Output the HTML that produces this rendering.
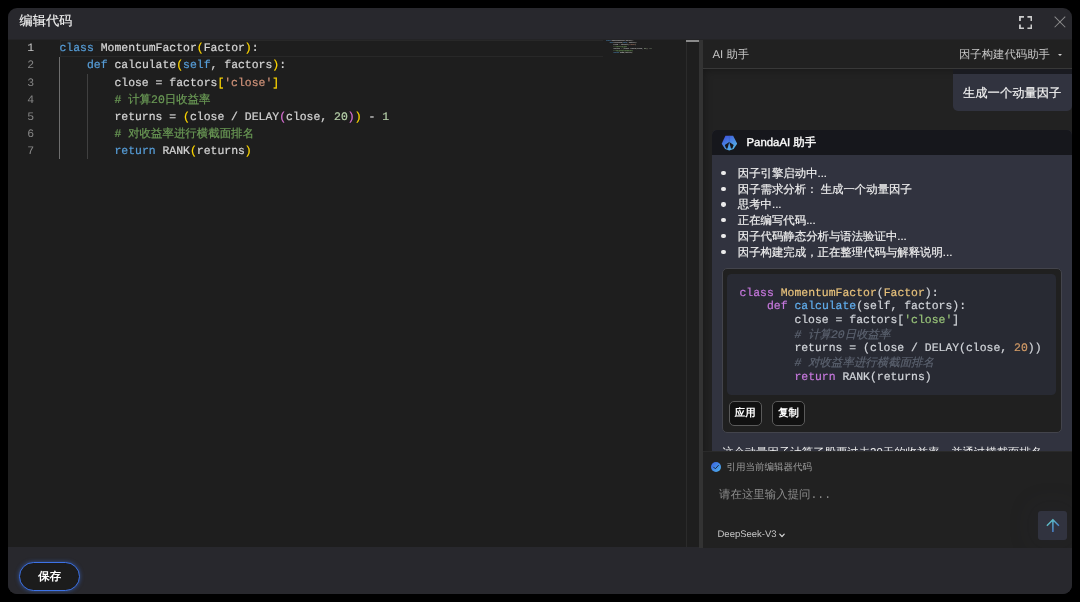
<!DOCTYPE html>
<html lang="zh">
<head>
<meta charset="utf-8">
<title>编辑代码</title>
<style>
*{box-sizing:border-box;margin:0;padding:0}
html,body{width:1080px;height:602px;background:#000;overflow:hidden}
body{font-family:"Liberation Sans",sans-serif;color:#ddd;position:relative;text-rendering:geometricPrecision}
.abs{position:absolute}
#modal{will-change:transform;position:absolute;left:8px;top:8px;width:1064px;height:586px;border-radius:9px;background:#28282d;overflow:hidden}
/* coordinates inside modal are offset by (8,8) */
#title{-webkit-text-stroke:.15px;position:absolute;left:11.5px;top:0;height:31.5px;line-height:25px;font-size:13.2px;color:#f2f2f2}
#ic-full{position:absolute;left:1010.6px;top:7.7px;width:13.4px;height:13.4px}
#ic-close{position:absolute;left:1045.9px;top:8.2px;width:11.9px;height:11.9px}
#editor{position:absolute;left:0;top:31.5px;width:690.7px;height:507.5px;background:#1e1e1e;overflow:hidden}
#split{position:absolute;left:690.8px;top:31.5px;width:4px;height:508.4px;background:#333}
#panel{position:absolute;left:694.5px;top:31.5px;width:369.5px;height:508.5px;background:#212121;overflow:hidden}
#tstrip{position:absolute;left:0;top:31px;width:1064px;height:1px;background:#242426;z-index:5}
#footer{position:absolute;left:0;top:540px;width:1064px;height:46px;background:#28282d}
/* editor */
.mono{font-family:"Liberation Mono",monospace}
#gutter{position:absolute;left:0;top:0;width:26px;text-align:right;font-size:11.45px;line-height:17.1px;color:#858585;padding-top:0.9px}
#gutter div{height:17.1px}
#gutter .act{color:#c6c6c6}
#code{position:absolute;left:51.5px;top:0;-webkit-text-stroke:.22px;font-size:11.45px;line-height:17.1px;color:#d4d4d4;white-space:pre;padding-top:0.9px}
#code div{height:17.1px}
#curline{position:absolute;left:51.5px;top:0;width:543px;height:17.1px;border:1.9px solid #282828;border-right:0}
.guide{position:absolute;width:1px;background:#404040}
.kw{color:#569cd6}.cm{color:#6a9955}.st{color:#ce9178}.nu{color:#b5cea8}.b1{color:#ffd700}.b2{color:#da70d6}
#mini{position:absolute;left:598px;top:0.2px;font-size:11.45px;line-height:17.1px;color:#d4d4d4;white-space:pre;transform-origin:0 0;transform:scale(.138,.111);-webkit-text-stroke:1.3px;opacity:.62}
#mini .b1,#mini .b2{color:#9c9c84}
#mini div{height:17.1px}
#sbline{position:absolute;left:677.6px;top:0;width:1px;height:100%;background:#2b2b2b}
#sbmark{position:absolute;left:678.3px;top:0;width:12.4px;height:2px;background:#8a8a8a}
/* panel */
#phead{position:absolute;left:0;top:0;width:100%;height:29.5px;border-bottom:1px solid #383838;font-size:11.4px;color:#c6c6c6}
#phead .l{position:absolute;left:10px;top:0;line-height:31px}
#phead .r{position:absolute;right:22px;top:0;line-height:31px;color:#c8c8c8}
#phead .caret{position:absolute;left:355.3px;top:14.2px;width:0;height:0;border-left:2.3px solid transparent;border-right:2.3px solid transparent;border-top:2.6px solid #cfcfcf}
#chat{position:absolute;left:0;top:29.5px;width:369.5px;height:382px;overflow:hidden;background:#222;box-shadow:inset 7px 7px 9px -6px rgba(0,0,0,.3)}
#ubub{position:absolute;left:250.5px;top:0;width:119px;height:41.8px;background:#31333f;border-radius:0 0 5px 5px;overflow:hidden}
#ubub .top{height:4.6px;background:#1a1b21}
#ubub .tx{-webkit-text-stroke:.18px;font-size:12.3px;color:#f4f4f4;line-height:39px;padding-left:10px;white-space:nowrap}
#card{position:absolute;left:9.5px;top:61px;width:360px;height:340px;background:#31333f;border-radius:5px 5px 0 0;overflow:hidden}
#chead{height:24.8px;background:#16171c;position:relative}
#chead svg{position:absolute;left:9px;top:5px;width:16px;height:16px}
#chead span{position:absolute;left:34.5px;top:1.3px;line-height:25px;font-size:11.4px;color:#fff;-webkit-text-stroke:0.35px #fff}
ul#steps{-webkit-text-stroke:.18px;list-style:none;position:absolute;left:0;top:36.8px;font-size:11.4px;line-height:15.75px;color:#f0f0f0}
ul#steps li{padding-left:25.8px;position:relative;white-space:nowrap;height:15.75px}
ul#steps li:before{content:"";position:absolute;left:9.35px;top:4.15px;width:4.3px;height:4.3px;border-radius:50%;background:#ebebeb}
#cb{position:absolute;left:10px;top:138.4px;width:340.1px;height:164.2px;background:#202020;border:1px solid #43444c;border-radius:5px}
#pre{position:absolute;left:4.1px;top:4.7px;width:329.2px;height:120.7px;background:#282a33;border-radius:4.5px;overflow:hidden;-webkit-text-stroke:.2px;font-size:11.45px;line-height:13.3px;color:#d3d6db;white-space:pre;padding:12.95px 0 0 12.4px}
#pre div{height:13.3px}
.hk{color:#c678dd}.hc{color:#e6c07b}.hf{color:#61aeee}.hs{color:#98c379}.hn{color:#d19a66}.hm{color:#5c6370;font-style:italic}
.btn{position:absolute;top:131.9px;width:32.5px;height:24.5px;border:1px solid #5a5a5a;border-radius:5px;background:#111;color:#fff;font-weight:bold;font-size:10.4px;line-height:24.6px;text-align:center}
#expl{position:absolute;left:10px;top:314.5px;font-size:11.4px;line-height:16px;color:#f0f0f0;white-space:nowrap}
#inp{position:absolute;left:0;top:411.5px;width:369.5px;height:96px;background:#212121;border-top:1px solid #2a2a2a}
#chk{position:absolute;left:8.4px;top:10px;width:10px;height:10px}
#chkl{position:absolute;left:24px;top:8.6px;font-size:9.5px;line-height:14px;color:#9e9e9e}
#ph{position:absolute;left:16.5px;top:36.1px;font-size:11.45px;line-height:16px;color:#8c8c8c;white-space:pre}
#model{position:absolute;left:15px;top:75.9px;font-size:9.5px;line-height:14px;color:#c6c6c6}
#model svg{position:absolute;left:61.5px;top:5.2px;width:6px;height:5px}
#send{position:absolute;left:335.6px;top:59.2px;width:28.7px;height:28.4px;border-radius:3px;background:#31333f;box-shadow:0 0 24px 10px rgba(60,62,80,.07)}
#send svg{position:absolute;left:8px;top:7px;width:14px;height:15px}
#save{position:absolute;left:11px;top:13.7px;width:61.3px;height:29.2px;border-radius:15px;border:1.3px solid #3d72e6;background:#1c1c1c;color:#fff;font-weight:bold;font-size:11.4px;line-height:28.8px;text-align:center;box-shadow:0 0 4px rgba(61,114,230,.55)}
</style>
</head>
<body>
<div id="modal">
  <div id="title">编辑代码</div>
  <svg id="ic-full" viewBox="0 0 14 14" fill="none" stroke="#cdcdcd" stroke-width="1.9"><path d="M1 5.2V1H5.2M8.8 1H13V5.2M13 8.8V13H8.8M5.2 13H1V8.8"/></svg>
  <svg id="ic-close" viewBox="0 0 13 13" fill="none" stroke="#8c8c8c" stroke-width="1.1"><path d="M0.7 0.7L12.3 12.3M12.3 0.7L0.7 12.3"/></svg>

  <div id="editor">
    <div id="curline"></div>
    <div class="guide" style="left:51px;top:17.3px;height:102.5px;background:#6e6e6e"></div>
    <div class="guide" style="left:79px;top:34.4px;height:85.4px"></div>
    <div id="gutter" class="mono"><div class="act">1</div><div>2</div><div>3</div><div>4</div><div>5</div><div>6</div><div>7</div></div>
    <div id="code" class="mono"><div><span class="kw">class</span> MomentumFactor<span class="b1">(</span>Factor<span class="b1">)</span>:</div><div>    <span class="kw">def</span> calculate<span class="b1">(</span><span class="kw">self</span>, factors<span class="b1">)</span>:</div><div>        close = factors<span class="b1">[</span><span class="st">'close'</span><span class="b1">]</span></div><div>        <span class="cm"># 计算20日收益率</span></div><div>        returns = <span class="b1">(</span>close / DELAY<span class="b2">(</span>close, <span class="nu">20</span><span class="b2">)</span><span class="b1">)</span> - <span class="nu">1</span></div><div>        <span class="cm"># 对收益率进行横截面排名</span></div><div>        <span class="kw">return</span> RANK<span class="b1">(</span>returns<span class="b1">)</span></div></div>
    <div id="mini" class="mono"><div><span class="kw">class</span> MomentumFactor<span class="b1">(</span>Factor<span class="b1">)</span>:</div><div>    <span class="kw">def</span> calculate<span class="b1">(</span><span class="kw">self</span>, factors<span class="b1">)</span>:</div><div>        close = factors<span class="b1">[</span><span class="st">'close'</span><span class="b1">]</span></div><div>        <span class="cm"># 计算20日收益率</span></div><div>        returns = <span class="b1">(</span>close / DELAY<span class="b2">(</span>close, <span class="nu">20</span><span class="b2">)</span><span class="b1">)</span> - <span class="nu">1</span></div><div>        <span class="cm"># 对收益率进行横截面排名</span></div><div>        <span class="kw">return</span> RANK<span class="b1">(</span>returns<span class="b1">)</span></div></div>
    <div id="sbline"></div>
    <div id="sbmark"></div>
  </div>
  <div id="split"></div>

  <div id="panel">
    <div id="phead"><span class="l">AI 助手</span><span class="r">因子构建代码助手</span><i class="caret"></i></div>
    <div id="chat">
      <div id="ubub"><div class="top"></div><div class="tx">生成一个动量因子</div></div>
      <div id="card">
        <div id="chead">
          <svg viewBox="-0.5 -0.1 16 16"><defs><linearGradient id="lg" x1="0.15" y1="0" x2="0.85" y2="1"><stop offset="0" stop-color="#3d52dc"/><stop offset="1" stop-color="#58c0e8"/></linearGradient></defs><path d="M3.9 0.6H11.6L15.7 8.6L12.1 13.8L7.75 15.5L3.6 13.8L0.2 8.6Z" fill="url(#lg)"/><path d="M7.74 7L3.3 9.8L4.6 13.3L6 13.3ZM7.74 7L12.18 9.8L10.88 13.3L9.48 13.3Z" fill="#16171c"/><path d="M7.75 0.6V6.8" stroke="#2c47b8" stroke-width="0.5" opacity=".7"/></svg>
          <span>PandaAI 助手</span>
        </div>
        <ul id="steps"><li>因子引擎启动中...</li><li>因子需求分析： 生成一个动量因子</li><li>思考中...</li><li>正在编写代码...</li><li>因子代码静态分析与语法验证中...</li><li>因子构建完成，正在整理代码与解释说明...</li></ul>
        <div id="cb">
          <div id="pre" class="mono"><div><span class="hk">class</span> <span class="hc">MomentumFactor</span>(<span class="hc">Factor</span>):</div><div>    <span class="hk">def</span> <span class="hf">calculate</span>(self, factors):</div><div>        close = factors[<span class="hs">'close'</span>]</div><div style="margin-top:1.6px">        <span class="hm"># 计算20日收益率</span></div><div style="margin-top:.6px">        returns = (close / DELAY(close, <span class="hn">20</span>))</div><div style="margin-top:1.4px">        <span class="hm"># 对收益率进行横截面排名</span></div><div style="margin-top:1px">        <span class="hk">return</span> RANK(returns)</div></div>
          <div class="btn" style="left:6px">应用</div>
          <div class="btn" style="left:49.3px">复制</div>
        </div>
        <div id="expl">这个动量因子计算了股票过去20天的收益率，并通过横截面排名</div>
      </div>
    </div>
    <div id="inp">
      <svg id="chk" viewBox="0 0 10 10"><defs><linearGradient id="lg2" x1="0" y1="0" x2="1" y2="1"><stop offset="0" stop-color="#3b5fe0"/><stop offset="1" stop-color="#4db4ec"/></linearGradient></defs><circle cx="5" cy="5" r="5" fill="url(#lg2)"/><path d="M2.6 5.1L4.3 6.8L7.4 3.4" fill="none" stroke="#18213c" stroke-width="0.95" stroke-linecap="round" stroke-linejoin="round"/></svg>
      <div id="chkl">引用当前编辑器代码</div>
      <div id="ph" class="mono">请在这里输入提问...</div>
      <div id="model">DeepSeek-V3<svg viewBox="0 0 6 5" fill="none" stroke="#d8d8d8" stroke-width="1.2" stroke-linecap="round" stroke-linejoin="round"><path d="M0.8 1.2L3 3.6L5.2 1.2"/></svg></div>
      <div id="send"><svg viewBox="0 0 14 15" fill="none" stroke-width="1.5" stroke-linecap="butt" stroke-linejoin="miter"><defs><linearGradient id="lg3" x1="1" y1="1" x2="13" y2="14" gradientUnits="userSpaceOnUse"><stop offset="0.1" stop-color="#63cac2"/><stop offset="0.9" stop-color="#4272cf"/></linearGradient></defs><path d="M6.9 14V1.7M0.9 7.7L6.9 1.7L12.9 7.7" stroke="url(#lg3)"/></svg></div>
    </div>
  </div>

  <div id="tstrip"></div>
  <div id="footer"><div id="save">保存</div></div>
</div>
</body>
</html>
